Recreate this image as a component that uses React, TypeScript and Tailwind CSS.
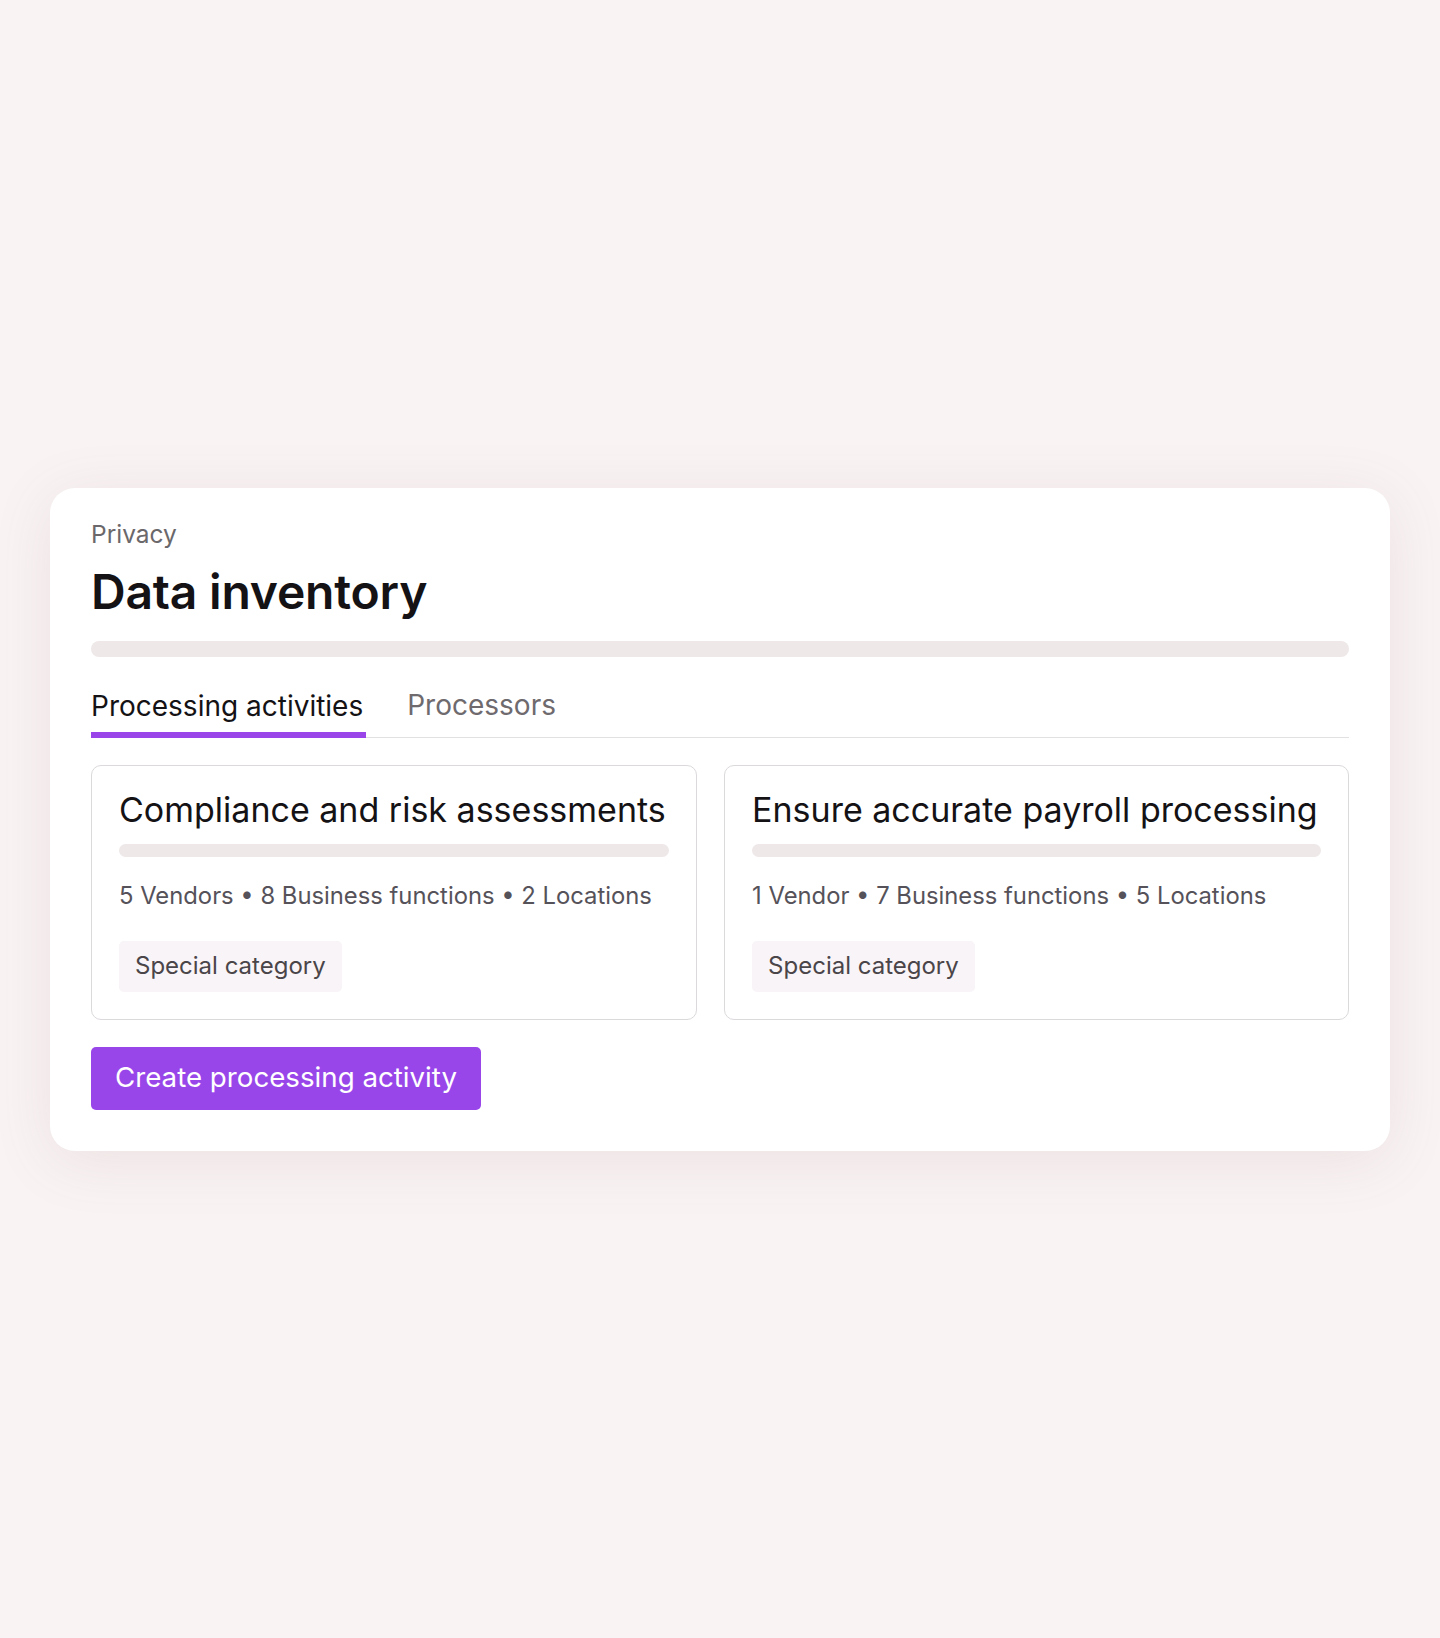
export default function App() {
  const cards = [
    {
      title: "Compliance and risk assessments",
      meta: ["5 Vendors", "8 Business functions", "2 Locations"],
    },
    {
      title: "Ensure accurate payroll processing",
      meta: ["1 Vendor", "7 Business functions", "5 Locations"],
    },
  ];

  return (
    <div
      className="min-h-screen w-full bg-[#f9f3f3] flex items-center px-[50px]"
      style={{ fontFamily: "Inter, 'Noto Sans', sans-serif" }}
    >
      {/* PANEL */}
      <div className="w-full bg-white rounded-[25px] shadow-[0_10px_60px_rgba(150,110,115,0.12)] px-[41px] pt-[30px] pb-[41px]">
        <p className="text-[24.5px] leading-[32px] text-[#6b686b]">Privacy</p>
        <h1 className="mt-[14px] text-[48px] leading-[56px] font-semibold text-[#141214] tracking-[-0.2px]">
          Data inventory
        </h1>
        <div className="mt-[21px] h-4 rounded-full bg-[#efe8e9]" />

        {/* TABS */}
        <div className="mt-[30px] flex items-end gap-[41px] border-b border-[#e3e0e3]">
          <div className="pb-[8px] border-b-[6px] border-[#9945ea] -mb-px text-[28px] leading-[36px] text-[#141214] pr-[3px]">
            Processing activities
          </div>
          <div className="pb-[14px] text-[28px] leading-[36px] text-[#6e6a6e]">
            Processors
          </div>
        </div>

        {/* CARDS */}
        <div className="mt-[27px] flex gap-[27px]">
          {cards.map((card) => (
            <div
              key={card.title}
              className="flex-auto border border-[#dcd9dc] rounded-[10px] px-[27px] pt-6 pb-[27px]"
            >
              <h2 className="text-[34px] leading-[40px] text-[#141214] whitespace-nowrap">
                {card.title}
              </h2>
              <div className="mt-[14px] h-[13px] rounded-full bg-[#efe8e9]" />
              <p className="mt-[23px] text-[23.8px] leading-[32px] text-[#56525a] whitespace-nowrap">
                {card.meta.join(" • ")}
              </p>
              <div className="mt-[29px] inline-flex items-center h-[51px] px-4 rounded-[5px] bg-[#f9f4f7] text-[24px] text-[#4a4549]">
                Special category
              </div>
            </div>
          ))}
        </div>

        <button className="mt-[27px] h-[63px] px-6 rounded-[5px] bg-[#9846ea] text-white text-[27.7px]">
          Create processing activity
        </button>
      </div>
    </div>
  );
}
